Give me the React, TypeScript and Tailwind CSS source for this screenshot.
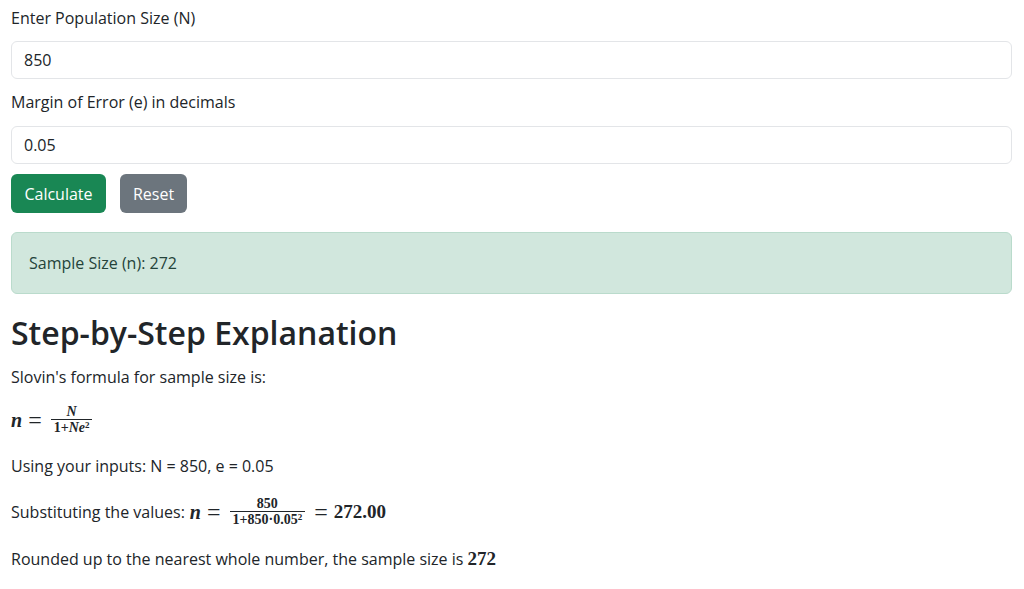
import { useState } from "react";

const SANS = "font-['Open_Sans',sans-serif]";
const MATH = "font-['Liberation_Serif',serif]";

function Frac({ num, den }: { num: React.ReactNode; den: React.ReactNode }) {
  return (
    <span className={`inline-flex flex-col items-center align-middle ${MATH} text-[14px] leading-[14px] mx-[3px]`}>
      <span className="px-[3px] font-bold">{num}</span>
      <span className="border-t border-[#212529] px-[3px] pt-[1px] font-bold">{den}</span>
    </span>
  );
}

function Eq() {
  return <span className={`${MATH} text-[24px] leading-[24px] mx-[6px]`}>=</span>;
}

export default function App() {
  const [n, setN] = useState("850");
  const [e, setE] = useState("0.05");

  return (
    <div className={`${SANS} text-[16px] text-[#212529] bg-white min-h-[589px] px-[11px] pt-[6px] w-[1024px]`}>
      <div className="w-[1001px]">
        <label className="block leading-6 mb-[11px]">Enter Population Size (N)</label>
        <input
          value={n}
          onChange={(ev) => setN(ev.target.value)}
          className="block w-full h-[38px] rounded-[6px] border border-[#e3e5e8] px-3 outline-none"
        />
        <label className="block leading-6 mt-[11px] mb-[12px]">Margin of Error (e) in decimals</label>
        <input
          value={e}
          onChange={(ev) => setE(ev.target.value)}
          className="block w-full h-[38px] rounded-[6px] border border-[#e3e5e8] px-3 outline-none"
        />
        <div className="flex gap-[14px] mt-[10px]">
          <button className="h-[39px] w-[95px] rounded-[6px] bg-[#198754] text-white">Calculate</button>
          <button className="h-[39px] w-[67px] rounded-[6px] bg-[#6c757d] text-white">Reset</button>
        </div>
        <div className="mt-[19px] h-[62px] flex items-center rounded-[6px] border border-[#badbcc] bg-[#d1e7dd] px-[17px] text-[#24433a]">
          Sample Size (n): 272
        </div>
        <h2 className="mt-[19px] text-[32px] font-semibold leading-[40px] text-[#212529]">Step-by-Step Explanation</h2>
        <p className="mt-[12px] leading-6">Slovin's formula for sample size is:</p>
        <div className="mt-[18px] h-[26px] flex items-center">
          <span className={`${MATH} italic text-[20px] font-bold`}>n</span>
          <Eq />
          <Frac
            num={<i>N</i>}
            den={
              <>
                1+<i>Ne</i>
                <sup className="text-[9px]">2</sup>
              </>
            }
          />
        </div>
        <p className="mt-[21px] leading-6">Using your inputs: N = 850, e = 0.05</p>
        <div className="mt-[21px] h-[26px] flex items-center">
          <span>Substituting the values:</span>
          <span className={`${MATH} italic text-[20px] font-bold ml-[5px]`}>n</span>
          <Eq />
          <Frac
            num="850"
            den={
              <>
                1+850·0.05<sup className="text-[9px]">2</sup>
              </>
            }
          />
          <Eq />
          <span className={`${MATH} text-[19px] font-bold`}>272.00</span>
        </div>
        <p className="mt-[22px] leading-6">
          Rounded up to the nearest whole number, the sample size is{" "}
          <span className={`${MATH} text-[19px] font-bold`}>272</span>
        </p>
      </div>
    </div>
  );
}
